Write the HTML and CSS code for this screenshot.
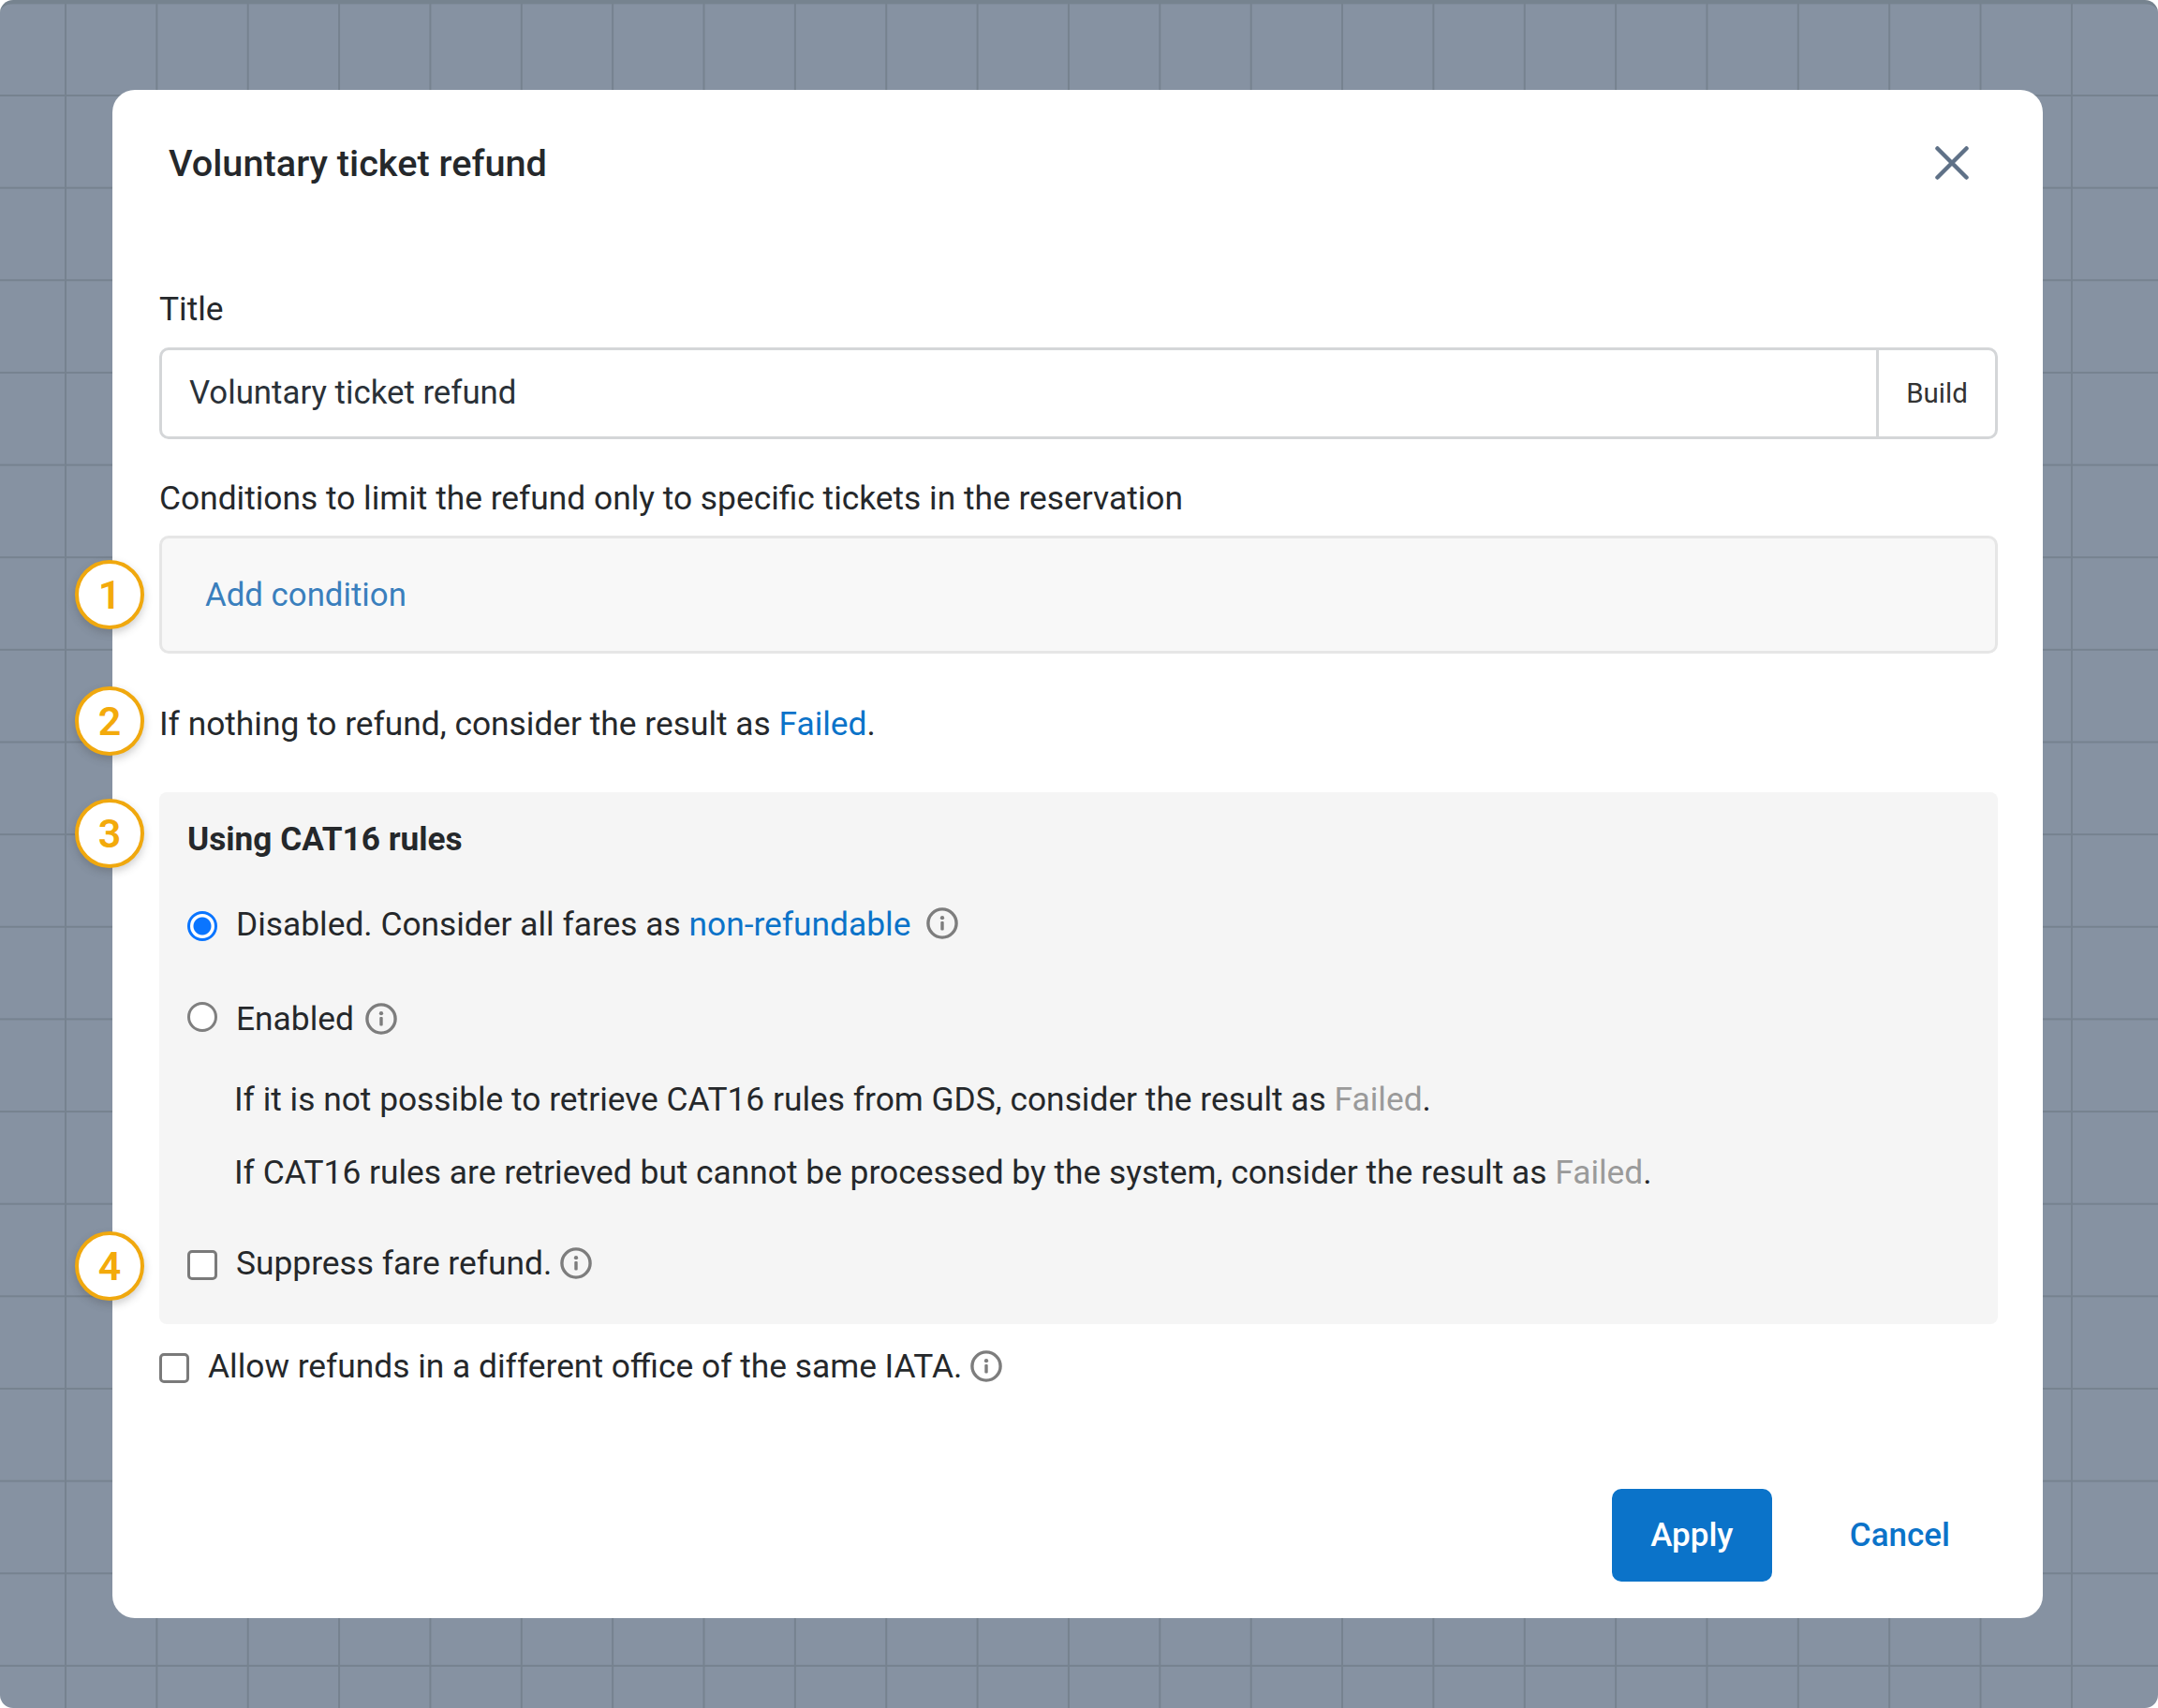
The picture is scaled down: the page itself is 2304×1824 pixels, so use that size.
FILE: index.html
```html
<!DOCTYPE html>
<html lang="en">
<head>
  <meta charset="UTF-8">
  <title>Voluntary ticket refund</title>
  <link rel="stylesheet" href="styles.css">
</head>
<body>

<svg class="defs" width="0" height="0">
  <symbol id="info" viewBox="0 0 32 32">
    <circle cx="16" cy="16" r="14.2" fill="none" stroke="currentColor" stroke-width="3.2"/>
    <circle cx="16" cy="10.5" r="2" fill="currentColor"/>
    <rect x="14.4" y="14" width="3.2" height="9" rx="1" fill="currentColor"/>
  </symbol>
</svg>

<div class="stage">
  <div class="modal">

    <span class="badge badge-1">1</span>
    <span class="badge badge-2">2</span>
    <span class="badge badge-3">3</span>
    <span class="badge badge-4">4</span>

    <div class="modal-head">
      <h2>Voluntary ticket refund</h2>
      <svg class="close" viewBox="0 0 36 36"><path d="M2.5 2.5 33.5 33.5M33.5 2.5 2.5 33.5"/></svg>
    </div>

    <div class="label title-label">Title</div>
    <div class="input-group">
      <div class="input-value">Voluntary ticket refund</div>
      <div class="input-addon">Build</div>
    </div>

    <div class="label cond-label">Conditions to limit the refund only to specific tickets in the reservation</div>
    <div class="cond-box"><a class="link">Add condition</a></div>

    <p class="line nothing">If nothing to refund, consider the result as <a class="link-strong">Failed</a>.</p>

    <div class="panel">
      <h3>Using CAT16 rules</h3>
      <label class="row row-disabled">
        <input type="radio" name="cat16" checked>
        <span>Disabled. Consider all fares as <a class="link-strong">non-refundable</a></span>
        <svg class="info info-far"><use href="#info"/></svg>
      </label>
      <label class="row row-enabled">
        <input type="radio" name="cat16">
        <span>Enabled</span>
        <svg class="info"><use href="#info"/></svg>
      </label>
      <p class="line sub sub-1">If it is not possible to retrieve CAT16 rules from GDS, consider the result as <span class="muted">Failed</span>.</p>
      <p class="line sub sub-2">If CAT16 rules are retrieved but cannot be processed by the system, consider the result as <span class="muted">Failed</span>.</p>
      <label class="row row-suppress">
        <input type="checkbox">
        <span>Suppress fare refund.</span>
        <svg class="info"><use href="#info"/></svg>
      </label>
    </div>

    <label class="row row-allow">
      <input type="checkbox">
      <span>Allow refunds in a different office of the same IATA.</span>
      <svg class="info"><use href="#info"/></svg>
    </label>

    <div class="modal-foot">
      <button class="btn-apply">Apply</button>
      <button class="btn-cancel">Cancel</button>
    </div>
  </div>
</div>

</body>
</html>
```

FILE: styles.css
```css
html, body {
  margin: 0;
  height: 100%;
  background: #fff;
}
body {
  font-family: Roboto, "Liberation Sans", sans-serif;
  font-size: 35.35px;
  line-height: 40px;
  color: #25282b;
}
.defs {
  display: block;
  height: 0;
}
.stage {
  height: 1824px;
  box-sizing: border-box;
  padding: 92px 123px 0 120px;
  border-radius: 14px;
  border-top: 4px solid #76838f;
  background-color: #8692a2;
  background-image:
    linear-gradient(to right, #76828f 0, #76828f 2px, transparent 2px),
    linear-gradient(to bottom, #76828f 0, #76828f 2px, transparent 2px);
  background-size: 97.36px 100%, 100% 98.65px;
  background-position: 69px 0, 0 97px;
}
.modal {
  position: relative;
  height: 1632px;
  box-sizing: border-box;
  padding: 50px 48px 39px 50px;
  background: #fff;
  border-radius: 24px;
}
.modal-head {
  display: flex;
  align-items: center;
  justify-content: space-between;
  height: 56px;
  padding: 0 31px 0 10px;
}
h2 {
  margin: 2px 0 0;
  font-size: 39.7px;
  font-weight: 500;
  line-height: 54px;
}
.close {
  width: 36px;
  height: 36px;
  fill: none;
  stroke: #5f7187;
  stroke-width: 4.5;
  stroke-linecap: round;
}

.title-label {
  margin-top: 108px;
}
.input-group {
  display: flex;
  height: 98px;
  margin-top: 21px;
  box-sizing: border-box;
  border: 3px solid #d4d6d8;
  border-radius: 10px;
}
.input-value {
  flex: 1;
  padding-left: 29px;
  font-size: 34.8px;
  line-height: 90px;
  color: #2a3138;
}
.input-addon {
  width: 124px;
  border-left: 3px solid #d4d6d8;
  font-size: 29.5px;
  line-height: 92px;
  text-align: center;
  color: #333;
}

.cond-label {
  margin-top: 43px;
}
.cond-box {
  height: 126px;
  margin-top: 20px;
  box-sizing: border-box;
  border: 3px solid #e6e6e6;
  border-radius: 10px;
  background: #f8f8f8;
  padding-left: 46px;
  font-size: 34.8px;
  line-height: 120px;
}
.link {
  color: #3a7fbd;
}
.link-strong {
  color: #0b73c9;
}
.muted {
  color: #9a9a9a;
}

.line {
  margin: 0;
}
.nothing {
  margin-top: 55px;
}

.panel {
  height: 568px;
  margin-top: 53px;
  box-sizing: border-box;
  padding: 30px 30px 0;
  background: #f5f5f5;
  border-radius: 8px;
}
h3 {
  margin: 0;
  font-size: 35.2px;
  font-weight: 700;
  line-height: 40px;
}
.row {
  display: flex;
  align-items: center;
  height: 40px;
}
.row-disabled {
  margin-top: 51px;
}
.row-enabled {
  margin-top: 61px;
}
.sub {
  padding-left: 50px;
}
.sub-1 {
  margin-top: 46px;
}
.sub-2 {
  margin-top: 38px;
}
.row-suppress {
  margin-top: 57px;
}
.row-allow {
  margin-top: 25px;
}

input {
  appearance: none;
  flex: none;
  width: 32px;
  height: 32px;
  margin: 4px 20px 0 0;
  background: #fff;
  box-sizing: border-box;
}
.row-enabled input {
  margin-top: -4px;
}
input[type="radio"] {
  border: 3px solid #7f7f7f;
  border-radius: 50%;
}
input[type="radio"]:checked {
  border-color: #0a75ff;
  background: radial-gradient(circle, #0a75ff 0, #0a75ff 9px, #fff 10px);
}
input[type="checkbox"] {
  border: 3px solid #7a7a7a;
  border-radius: 5px;
}
.info {
  flex: none;
  width: 34px;
  height: 34px;
  margin-left: 9px;
  color: #7d7d7d;
}
.row-enabled .info {
  margin-left: 12px;
}
.info-far {
  margin: -3px 0 0 17px;
}

.modal-foot {
  display: flex;
  justify-content: flex-end;
  align-items: center;
  gap: 83px;
  margin-top: 111px;
  padding-right: 51px;
}
button {
  font-family: inherit;
  font-size: 35px;
  font-weight: 500;
  border: none;
  padding: 0;
  background: none;
  cursor: pointer;
}
.btn-apply {
  width: 171px;
  height: 99px;
  background: #0b73c9;
  border-radius: 10px;
  color: #fff;
}
.btn-cancel {
  color: #0b73c9;
}

.badge {
  position: absolute;
  left: -40px;
  width: 74px;
  height: 74px;
  box-sizing: border-box;
  border: 4px solid #f0a80e;
  border-radius: 50%;
  background: #fff;
  box-shadow: 0 4px 8px rgba(60, 60, 60, 0.25);
  font-size: 43px;
  font-weight: 600;
  line-height: 66px;
  text-align: center;
  color: #f3aa0b;
}
.badge-1 { top: 502px; }
.badge-2 { top: 637px; }
.badge-3 { top: 757px; }
.badge-4 { top: 1219px; }
```
